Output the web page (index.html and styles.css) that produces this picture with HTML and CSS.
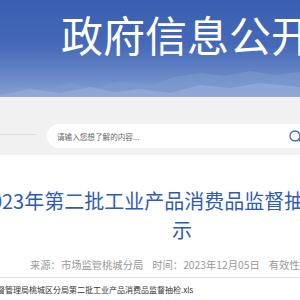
FILE: index.html
```html
<!DOCTYPE html>
<html lang="zh-CN">
  <head>
    <meta charset="utf-8" />
    <meta name="viewport" content="width=device-width, initial-scale=1" />
    <title>政府信息公开</title>
    <link rel="stylesheet" href="styles.css">
  </head>
  <body>
    <header class="banner">
      <h1 class="banner-title">政府信息公开</h1>
      <svg class="banner-hills" viewBox="0 0 300 34" preserveAspectRatio="none">
        <path d="M0 30 L20 24 L45 27 L70 20 L95 25 L120 18 L150 22 L175 14 L200 10 L225 13 L250 8 L275 12 L300 9 L300 34 L0 34 Z" fill="#7f9bd0" opacity="0.55"/>
        <path d="M0 32 L30 26 L60 30 L90 24 L115 29 L140 26 L170 30 L200 22 L230 25 L260 20 L300 24 L300 34 L0 34 Z" fill="#9ab1dc" opacity="0.6"/>
      </svg>
    </header>

    <div class="search-bar">
      <span class="search-rule"></span>
      <div class="search-box">
        <span class="search-hint">请输入您想了解的内容...</span>
        <svg class="search-icon" viewBox="0 0 16 16">
          <circle cx="6" cy="6" r="5" fill="none" stroke="#4466b8" stroke-width="1.3"/>
          <path d="M9.8 9.8 L14 14" stroke="#4466b8" stroke-width="1.5"/>
        </svg>
      </div>
    </div>

    <main class="article">
      <h2 class="article-title">2023年第二批工业产品消费品监督抽检结果公<br>示</h2>
      <div class="article-meta">
        <span>来源：市场监管桃城分局</span>
        <span>时间：2023年12月05日</span>
        <span>有效性：有效</span>
      </div>
      <div class="article-files">
        <a class="file-link" href="#">市场监督管理局桃城区分局第二批工业产品消费品监督抽检.xls</a>
      </div>
    </main>
  </body>
</html>
```

FILE: styles.css
```css
* {
  box-sizing: border-box;
  margin: 0;
  padding: 0;
}

body {
  font-family: "Noto Sans CJK SC", "Noto Sans", sans-serif;
  background-color: #fff;
  color: #333;
  overflow: hidden;
  width: 300px;
}

.banner {
  height: 97px;
  display: flex;
  flex-direction: column;
  background: linear-gradient(180deg, #3b5fb0 0%, #4569b8 45%, #6484c4 75%, #86a0d2 100%);
  overflow: hidden;
}

.banner-title {
  padding: 13px 0 0 61px;
  font-size: 42px;
  line-height: 42px;
  font-weight: normal;
  color: #fff;
  white-space: nowrap;
}

.banner-hills {
  display: block;
  margin-top: auto;
  width: 300px;
  height: 34px;
}

.search-bar {
  height: 58px;
  display: flex;
  align-items: flex-start;
  padding-top: 27px;
  background-color: #f1f1f1;
  overflow: hidden;
}

.search-rule {
  flex: none;
  width: 36px;
  height: 1px;
  margin: 10px 11px 0 0;
  background-color: #dcdcdc;
}

.search-box {
  flex: none;
  width: 270px;
  height: 24px;
  display: flex;
  align-items: center;
  padding: 0 12px 0 10px;
  background-color: #fff;
  border-radius: 12px;
}

.search-hint {
  flex: 1;
  font-size: 7.6px;
  color: #666;
  white-space: nowrap;
}

.search-icon {
  flex: none;
  width: 16px;
  height: 16px;
  margin-top: 3px;
}

.article {
  padding-top: 31px;
}

.article-title {
  width: 420px;
  margin-left: -28px;
  font-size: 20px;
  line-height: 29px;
  font-weight: normal;
  text-align: center;
  color: #2f5bb7;
}

.article-meta {
  display: flex;
  gap: 9px;
  margin-top: 14px;
  padding: 0 0 5px 30px;
  font-size: 10.3px;
  line-height: 14px;
  color: #999;
  white-space: nowrap;
  border-bottom: 1px solid #e2e2e2;
}

.article-files {
  padding-top: 6px;
  font-size: 8px;
  line-height: 12px;
  white-space: nowrap;
}

.file-link {
  display: inline-block;
  margin-left: -27px;
  color: #333;
  text-decoration: none;
}
```
